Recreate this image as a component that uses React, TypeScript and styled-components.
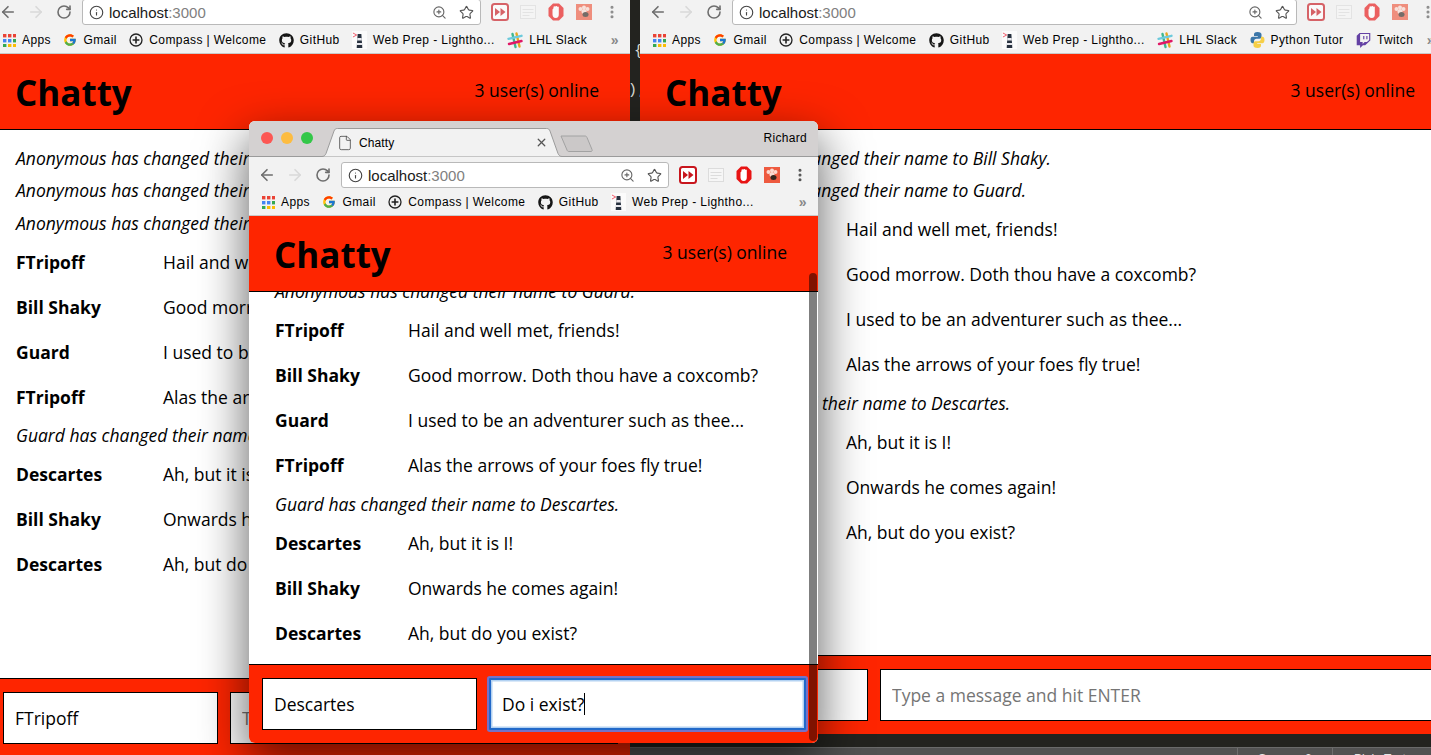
import React from 'react';
import styled, { createGlobalStyle } from 'styled-components';
import { ArrowLeft, ArrowRight, RotateCw, Info, ZoomIn, Star, EllipsisVertical, File, X } from 'lucide-react';
import { FaGithub, FaTwitch } from 'react-icons/fa';
import { FcGoogle } from 'react-icons/fc';

type Entry = { user?: string; text: string };

const RED = '#fe2500';

const notices: Entry[] = [
  { text: 'Anonymous has changed their name to FTripoff.' },
  { text: 'Anonymous has changed their name to Bill Shaky.' },
  { text: 'Anonymous has changed their name to Guard.' },
];

const chat: Entry[] = [
  { user: 'FTripoff', text: 'Hail and well met, friends!' },
  { user: 'Bill Shaky', text: 'Good morrow. Doth thou have a coxcomb?' },
  { user: 'Guard', text: 'I used to be an adventurer such as thee...' },
  { user: 'FTripoff', text: 'Alas the arrows of your foes fly true!' },
  { text: 'Guard has changed their name to Descartes.' },
  { user: 'Descartes', text: 'Ah, but it is I!' },
  { user: 'Bill Shaky', text: 'Onwards he comes again!' },
  { user: 'Descartes', text: 'Ah, but do you exist?' },
];

const AppsIcon = () => (
  <svg width="13" height="13" viewBox="0 0 13 13">
    {['#ea4335', '#ea4335', '#ea4335', '#4285f4', '#4285f4', '#34a853', '#34a853', '#fbbc05', '#fbbc05'].map((fill, i) => (
      <rect key={i} x={(i % 3) * 5} y={Math.floor(i / 3) * 5} width="3.4" height="3.4" fill={fill} />
    ))}
  </svg>
);

const CompassIcon = () => (
  <svg width="14" height="14" viewBox="0 0 14 14" fill="none" stroke="#222">
    <circle cx="7" cy="7" r="6" strokeWidth="1.3" />
    <path d="M7 3.6v6.8M3.6 7h6.8" strokeWidth="1.6" />
  </svg>
);

const LighthouseIcon = () => (
  <svg width="15" height="18" viewBox="0 0 16 18" preserveAspectRatio="none">
    <rect width="16" height="18" fill="#fbfbfb" />
    <path d="M6 3h4l1 14H5z" fill="#27313f" />
    <path d="M5.7 7h4.6l.2 2.5H5.5zM5.3 12h5.4l.2 2H5.1z" fill="#e9e9ee" />
    <path d="M1 2l4 2M1 6l4-2" stroke="#ef5a6a" strokeWidth="1" />
  </svg>
);

const SlackIcon = () => (
  <svg width="16" height="17" viewBox="0 0 16 17" strokeWidth="2.4" strokeLinecap="round" fill="none">
    <path d="M5.5 2l3 13" stroke="#3eb890" />
    <path d="M10.5 1.5l3 13" stroke="#e8a723" transform="translate(-1 0)" />
    <path d="M1.5 5.8l13-3" stroke="#6ecadc" transform="translate(0 1)" />
    <path d="M2 12l12.5-3" stroke="#e01765" />
  </svg>
);

const PythonIcon = () => (
  <svg width="15" height="18" viewBox="0 0 15 18">
    <path d="M7.5 1C4.7 1 4 2 4 3.4V5h3.8v.8H2.6C1.2 5.8.5 7 .5 9s.8 3.2 2.1 3.2H4v-2c0-1.4 1.1-2.4 2.5-2.4h3c1.1 0 2-.9 2-2V3.4C11.5 2 10.3 1 7.5 1z" fill="#3b76a8" />
    <path d="M7.5 17c2.8 0 3.5-1 3.5-2.4V13H7.2v-.8h5.2c1.4 0 2.1-1.2 2.1-3.2s-.8-3.2-2.1-3.2H11v2c0 1.4-1.1 2.4-2.5 2.4h-3c-1.100 0-2 .9-2 2v2.4C3.5 16 4.7 17 7.5 17z" fill="#f6cf47" />
  </svg>
);

const FastForwardIcon = () => (
  <svg width="18" height="18" viewBox="0 0 18 18">
    <rect x="1" y="1" width="16" height="16" rx="2.5" fill="#fff" stroke="#c8161d" strokeWidth="2" />
    <path d="M4 5l5 4-5 4zM9.5 5l5 4-5 4z" fill="#c8161d" />
  </svg>
);

const NotesIcon = () => (
  <svg width="16" height="14" viewBox="0 0 16 14" fill="#f6f6f6" stroke="#dcdcdc">
    <rect x=".5" y=".5" width="15" height="13" />
    <path d="M2.5 4.5h11M2.5 7.5h11M2.5 10.5h7" />
  </svg>
);

const HandIcon = () => (
  <svg width="16" height="18" viewBox="0 0 16 18">
    <path d="M5 .5h6L15.5 5v8L11 17.5H5L.5 13V5z" fill="#e81313" />
    <path d="M4.5 7c0-1 .5-1.500 1-1.500V4c0-1 1.700-1 1.700 0 0-1.200 2-1.200 2 0 0-.7 1.600-.7 1.600.3v7c0 2.500-1 3.700-3 3.700-2.500 0-3-1.500-3.300-3.500z" fill="#fff" />
  </svg>
);

const BeeIcon = () => (
  <svg width="16" height="16" viewBox="0 0 16 16">
    <rect width="16" height="16" fill="#ee5a3f" />
    <circle cx="4.5" cy="5" r="2" fill="#fbd9d0" />
    <circle cx="8" cy="3.5" r="2" fill="#fbd9d0" />
    <circle cx="11.5" cy="5" r="2" fill="#fbd9d0" />
    <circle cx="8" cy="7.5" r="2.5" fill="#fbd9d0" />
    <ellipse cx="9.5" cy="10.5" rx="3" ry="2.5" fill="#33261f" />
  </svg>
);

const links: { label: string; icon: React.ReactNode }[] = [
  { label: 'Apps', icon: <AppsIcon /> },
  { label: 'Gmail', icon: <FcGoogle size={14} /> },
  { label: 'Compass | Welcome', icon: <CompassIcon /> },
  { label: 'GitHub', icon: <FaGithub size={15} color="#161616" /> },
  { label: 'Web Prep - Lightho...', icon: <LighthouseIcon /> },
  { label: 'LHL Slack', icon: <SlackIcon /> },
  { label: 'Python Tutor', icon: <PythonIcon /> },
  { label: 'Twitch', icon: <FaTwitch size={15} color="#6441a4" /> },
];

interface BrowserProps {
  left: number;
  top: number;
  width: number;
  height: number;
  linkCount: number;
  nameWidth: number;
  items: Entry[];
  nameValue: string;
  floating?: boolean;
  title?: boolean;
}

const Browser: React.FC<BrowserProps> = ({ left, top, width, height, linkCount, nameWidth, items, nameValue, floating, title }) => (
  <Frame $left={left} $top={top} $width={width} $height={height} $floating={floating}>
    {title && (
      <TitleBar>
        <Lights>
          <Light $color="#fc5753" />
          <Light $color="#fdbc40" />
          <Light $color="#33c748" />
        </Lights>
        <Tab>
          <TabShape width="242" height="29" viewBox="0 0 242 29">
            <path d="M0 28.5h1c2 0 3-1 4-3L13 3c.7-1.7 1.5-2.5 3.5-2.5h209c2 0 2.8.8 3.500 2.500l8 22.500c1 2 2 3 4 3h1" fill="#f2f2f2" stroke="#9b9b9b" />
          </TabShape>
          <File size={16} color="#444" strokeWidth={1.2} />
          <TabTitle>Chatty</TabTitle>
          <X size={13} color="#555" strokeWidth={2.4} />
        </Tab>
        <svg width="34" height="18" viewBox="0 0 34 18" style={{ alignSelf: 'flex-end', marginLeft: -3, marginBottom: 3 }}>
          <path d="M1 1h24c1 0 1.6.5 2 1.5l5 12c.5 1.3 0 2-1 2H9c-1 0-1.7-.5-2-1.500z" fill="#cbc8c8" stroke="#a2a2a2" />
        </svg>
        <Profile>Richard</Profile>
      </TitleBar>
    )}
    <Toolbar $raised={!floating}>
      <NavButton><ArrowLeft size={18} color="#6e6e6e" strokeWidth={2.2} /></NavButton>
      <NavButton><ArrowRight size={18} color="#d9d9d9" strokeWidth={2.2} /></NavButton>
      <NavButton><RotateCw size={16} color="#6e6e6e" strokeWidth={2.4} /></NavButton>
      <Address>
        <Info size={15} color="#444" strokeWidth={1.8} />
        <Host>localhost<Port>:3000</Port></Host>
        <ZoomIn size={15} color="#666" strokeWidth={1.8} />
        <Star size={15} color="#555" strokeWidth={1.8} />
      </Address>
      <Extensions $dim={!floating}>
        <NavButton><FastForwardIcon /></NavButton>
        <NavButton><NotesIcon /></NavButton>
        <NavButton><HandIcon /></NavButton>
        <NavButton><BeeIcon /></NavButton>
        <NavButton><EllipsisVertical size={16} color="#555" strokeWidth={2.6} /></NavButton>
      </Extensions>
    </Toolbar>
    <Bookmarks>
      {links.slice(0, linkCount).map((link) => (
        <Bookmark key={link.label}>
          {link.icon}
          <span>{link.label}</span>
        </Bookmark>
      ))}
      <More>»</More>
    </Bookmarks>
    <Header>
      <Brand>Chatty</Brand>
      <Online>3 user(s) online</Online>
    </Header>
    <MessageList $floating={floating}>
      {items.map((item, i) =>
        item.user ? (
          <ChatRow key={i}>
            <UserName $width={nameWidth}>{item.user}</UserName>
            <span>{item.text}</span>
          </ChatRow>
        ) : (
          <Notice key={i}>{item.text}</Notice>
        ),
      )}
    </MessageList>
    <Footer>
      <NameField readOnly value={nameValue} />
      {floating ? (
        <FocusedField>Do i exist?<Caret /></FocusedField>
      ) : (
        <MessageField readOnly placeholder="Type a message and hit ENTER" />
      )}
    </Footer>
    {floating && <ScrollThumb />}
  </Frame>
);

const App: React.FC = () => (
  <>
    <GlobalStyle />
    <Desktop>
      <Editor>
        <CodeLine $indent={6}>{'{'}</CodeLine>
        <CodeLine $indent={0}>{');'}</CodeLine>
      </Editor>
      <StatusBar>
        <StatusCell>Spaces: 2</StatusCell>
        <StatusCell>Plain Text</StatusCell>
      </StatusBar>
      <Browser left={-10} top={-5} width={640} height={762} linkCount={6} nameWidth={147} items={[...notices, ...chat]} nameValue="FTripoff" />
      <Browser left={640} top={-5} width={806} height={739} linkCount={8} nameWidth={180} items={[...notices.slice(1), ...chat]} nameValue="Descartes" />
      <Browser left={249} top={121} width={569} height={622} linkCount={5} nameWidth={133} items={[...notices, ...chat]} nameValue="Descartes" floating title />
    </Desktop>
  </>
);

const GlobalStyle = createGlobalStyle`
  html, body {
    margin: 0;
    padding: 0;
    background: #23231f;
  }
`;

const Desktop = styled.div`
  position: relative;
  width: 1431px;
  height: 755px;
  overflow: hidden;
  display: flex;
  flex-direction: column;
  background: #23231f;
  font-family: 'Open Sans', sans-serif;
  color: #000;
`;

const Editor = styled.div`
  height: 747px;
  flex-shrink: 0;
  box-sizing: border-box;
  padding: 32px 0 0 628px;
  font-family: 'Liberation Mono', monospace;
  font-size: 15px;
  line-height: 39px;
  color: #d8d8d0;
`;

const CodeLine = styled.div<{ $indent: number }>`
  padding-left: ${(p) => p.$indent}px;
`;

const StatusBar = styled.div`
  height: 24px;
  flex-shrink: 0;
  display: flex;
  justify-content: flex-end;
  padding-right: 4px;
  background: #525252;
  border-top: 1px solid #6a6a6a;
  font-family: 'Liberation Sans', sans-serif;
  font-size: 12px;
  color: #e6e6e6;
`;

const StatusCell = styled.div`
  width: 95px;
  box-sizing: border-box;
  padding-top: 4px;
  text-align: center;
  border-left: 1px solid #6e6e6e;
`;

const Frame = styled.div<{ $left: number; $top: number; $width: number; $height: number; $floating?: boolean }>`
  position: absolute;
  left: ${(p) => p.$left}px;
  top: ${(p) => p.$top}px;
  width: ${(p) => p.$width}px;
  height: ${(p) => p.$height}px;
  display: flex;
  flex-direction: column;
  overflow: hidden;
  background: #fff;
  border-radius: ${(p) => (p.$floating ? '6px' : '0')};
  ${(p) => p.$floating && 'box-shadow: 0 18px 48px 2px rgba(0, 0, 0, 0.6);'}
`;

const TitleBar = styled.div`
  height: 36px;
  flex-shrink: 0;
  box-sizing: border-box;
  display: flex;
  align-items: center;
  position: relative;
  padding: 0 11px 0 12px;
  background: #d4d1d1;
  border-bottom: 1px solid #9b9b9b;
  font-family: 'Liberation Sans', sans-serif;
  font-size: 12px;
`;

const Lights = styled.div`
  display: flex;
  gap: 8px;
  margin-top: -1px;
`;

const Light = styled.span<{ $color: string }>`
  width: 12px;
  height: 12px;
  border-radius: 50%;
  background: ${(p) => p.$color};
`;

const Tab = styled.div`
  position: relative;
  width: 242px;
  height: 29px;
  margin: 0 0 -1px 8px;
  align-self: flex-end;
  box-sizing: border-box;
  display: flex;
  align-items: center;
  padding: 0 15px 0 16px;
  gap: 6px;
`;

const TabShape = styled.svg`
  position: absolute;
  left: 0;
  top: 0;
  & ~ span, & ~ svg {
    position: relative;
  }
`;

const TabTitle = styled.span`
  flex: 1;
  letter-spacing: 0.1px;
`;

const Profile = styled.span`
  margin-left: auto;
  margin-top: -2px;
  letter-spacing: 0.3px;
`;

const Toolbar = styled.div<{ $raised?: boolean }>`
  height: 31px;
  flex-shrink: 0;
  box-sizing: border-box;
  display: flex;
  align-items: flex-end;
  padding: 4px 4px ${(p) => (p.$raised ? '1px' : '0')} 4px;
  background: #f2f2f2;
`;

const NavButton = styled.div`
  width: 28px;
  height: 26px;
  flex-shrink: 0;
  display: flex;
  align-items: center;
  justify-content: center;
`;

const Address = styled.div`
  flex: 1;
  height: 26px;
  box-sizing: border-box;
  display: flex;
  align-items: center;
  margin-left: 4px;
  padding: 0 6px;
  background: #fff;
  border: 1px solid #b9b9b9;
  border-radius: 3px;
  & > svg:last-child {
    margin-left: 12px;
  }
`;

const Host = styled.span`
  flex: 1;
  padding-left: 5px;
  font-family: 'Liberation Sans', sans-serif;
  font-size: 15px;
  color: #1a1a1a;
`;

const Port = styled.span`
  color: #808080;
`;

const Extensions = styled.div<{ $dim?: boolean }>`
  display: flex;
  margin-left: 5px;
  flex-shrink: 0;
  opacity: ${(p) => (p.$dim ? 0.65 : 1)};
`;

const Bookmarks = styled.div`
  height: 28px;
  flex-shrink: 0;
  box-sizing: border-box;
  display: flex;
  align-items: center;
  gap: 12.5px;
  padding: 1px 11px 0 13px;
  background: #f2f2f2;
  border-bottom: 1px solid #c9c9c9;
  font-family: 'Liberation Sans', sans-serif;
  font-size: 12px;
  letter-spacing: 0.4px;
`;

const Bookmark = styled.div`
  display: flex;
  align-items: center;
  gap: 6px;
  white-space: nowrap;
`;

const More = styled.span`
  margin-left: auto;
  font-size: 14px;
  font-weight: 700;
  color: #888;
`;

const Header = styled.div`
  height: 76px;
  flex-shrink: 0;
  box-sizing: border-box;
  display: flex;
  align-items: center;
  justify-content: space-between;
  padding: 0 31px 3px 26px;
  background: ${RED};
  border-bottom: 1px solid #000;
`;

const Brand = styled.h1`
  margin: 5px 0 0 -1px;
  font-size: 35px;
  font-weight: 700;
  line-height: 1.2;
`;

const Online = styled.span`
  font-size: 17.5px;
`;

const MessageList = styled.div<{ $floating?: boolean }>`
  flex: 1;
  min-height: 0;
  box-sizing: border-box;
  display: flex;
  flex-direction: column;
  justify-content: ${(p) => (p.$floating ? 'flex-end' : 'flex-start')};
  padding: 11.6px 0 9px 26px;
  overflow: hidden;
  background: #fff;
  font-size: 17.5px;
`;

const ChatRow = styled.div`
  height: 45px;
  flex-shrink: 0;
  display: flex;
  align-items: center;
  white-space: nowrap;
`;

const UserName = styled.span<{ $width: number }>`
  width: ${(p) => p.$width}px;
  flex-shrink: 0;
  font-weight: 700;
`;

const Notice = styled.div`
  height: 32.5px;
  line-height: 32.5px;
  flex-shrink: 0;
  font-style: italic;
  white-space: nowrap;
`;

const Footer = styled.div`
  height: 79px;
  flex-shrink: 0;
  box-sizing: border-box;
  display: flex;
  align-items: flex-start;
  gap: 12px;
  padding: 13px 12px 0 13px;
  background: ${RED};
  border-top: 1px solid #000;
`;

const NameField = styled.input`
  width: 215px;
  height: 52px;
  flex-shrink: 0;
  box-sizing: border-box;
  padding: 0 11px;
  border: 1px solid #000;
  border-radius: 0;
  outline: none;
  background: #fff;
  font-family: 'Open Sans', sans-serif;
  font-size: 17.5px;
  color: #000;
`;

const MessageField = styled(NameField)`
  flex: 1;
  width: auto;
  min-width: 0;
  &::placeholder {
    color: #757575;
    opacity: 1;
  }
`;

const FocusedField = styled.div`
  flex: 1;
  height: 52px;
  box-sizing: border-box;
  display: flex;
  align-items: center;
  padding: 0 11px;
  border: 2px solid #2269c9;
  background: #fff;
  box-shadow: inset 0 0 0 1.5px #b3d2f2, 0 0 0 2px #7472c8;
  border-radius: 1px;
  font-size: 17.5px;
`;

const Caret = styled.span`
  width: 1px;
  height: 22px;
  background: #000;
`;

const ScrollThumb = styled.div`
  position: absolute;
  left: 560px;
  top: 152px;
  bottom: 2px;
  width: 8px;
  border-radius: 4px;
  background: rgba(0, 0, 0, 0.5);
`;

export default App;
